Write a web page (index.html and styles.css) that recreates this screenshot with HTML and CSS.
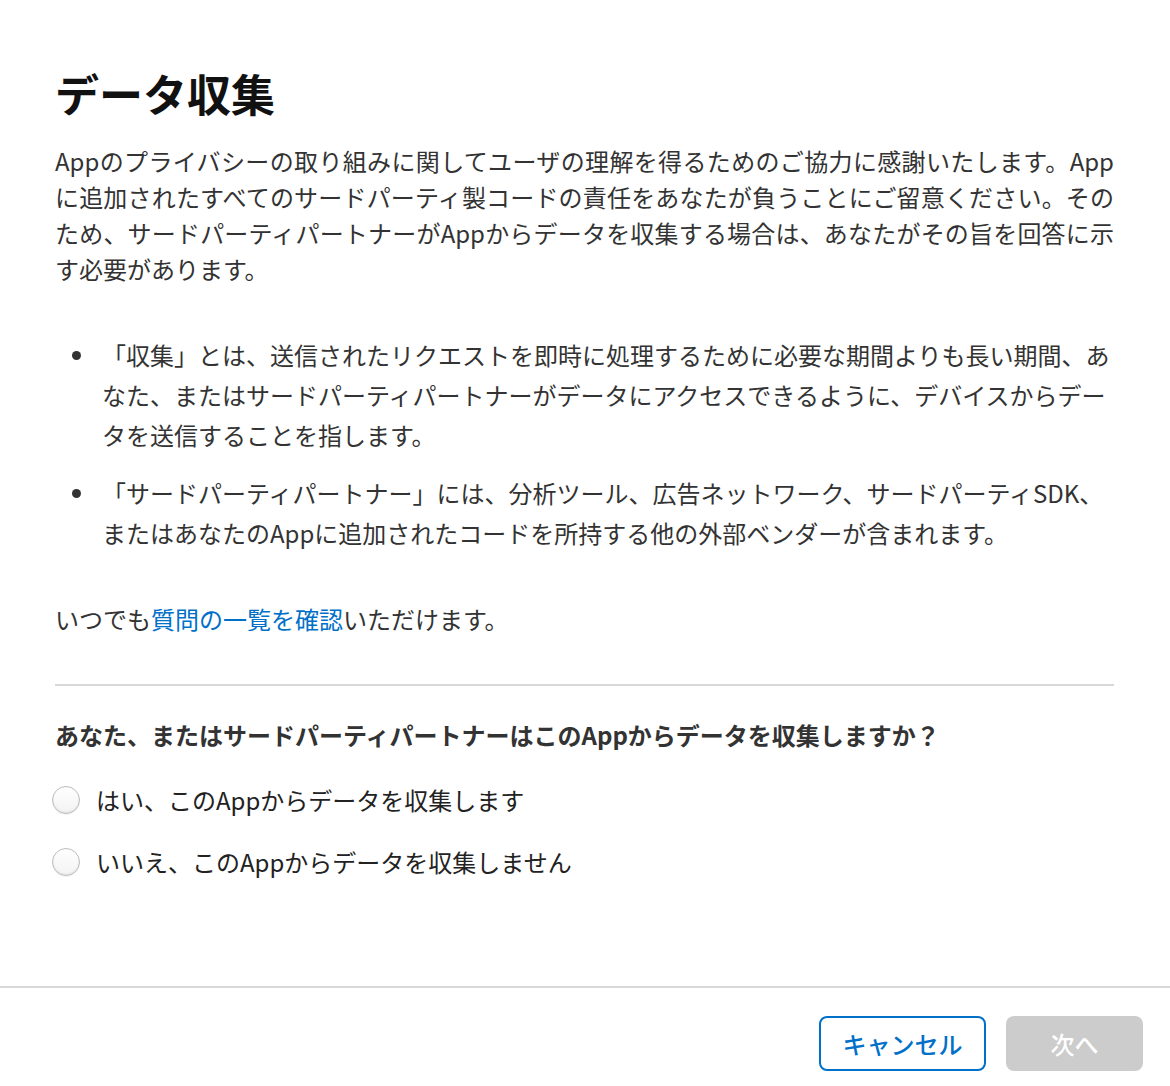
FILE: index.html
```html
<!DOCTYPE html>
<html lang="ja">
<head>
<meta charset="utf-8">
<title>データ収集</title>
<link rel="stylesheet" href="styles.css">
</head>
<body>
<div class="modal">
  <main class="content">
    <h1 class="title">データ収集</h1>
    <p class="intro">Appのプライバシーの取り組みに関してユーザの理解を得るためのご協力に感謝いたします。Appに追加されたすべてのサードパーティ製コードの責任をあなたが負うことにご留意ください。そのため、サードパーティパートナーがAppからデータを収集する場合は、あなたがその旨を回答に示す必要があります。</p>
    <ul class="defs">
      <li class="def">「収集」とは、送信されたリクエストを即時に処理するために必要な期間よりも長い期間、あなた、またはサードパーティパートナーがデータにアクセスできるように、デバイスからデータを送信することを指します。</li>
      <li class="def">「サードパーティパートナー」には、分析ツール、広告ネットワーク、サードパーティSDK、またはあなたのAppに追加されたコードを所持する他の外部ベンダーが含まれます。</li>
    </ul>
    <p class="note">いつでも<a class="link" href="#">質問の一覧を確認</a>いただけます。</p>
    <hr class="divider">
    <p class="question">あなた、またはサードパーティパートナーはこのAppからデータを収集しますか？</p>
    <div class="options">
      <label class="option"><span class="radio"></span><span class="option-text">はい、このAppからデータを収集します</span></label>
      <label class="option"><span class="radio"></span><span class="option-text">いいえ、このAppからデータを収集しません</span></label>
    </div>
  </main>
  <footer class="footer">
    <button class="btn btn-cancel" type="button">キャンセル</button>
    <button class="btn btn-next" type="button" disabled>次へ</button>
  </footer>
</div>
</body>
</html>
```

FILE: styles.css
```css
* { box-sizing: border-box; }

html, body {
  margin: 0;
  padding: 0;
  background: #fff;
}

body {
  font-family: "Noto Sans CJK JP", "Noto Sans", sans-serif;
  color: #333;
  font-size: 24px;
}

.modal {
  height: 1086px;
  display: flex;
  flex-direction: column;
}

.content {
  flex: 1;
  padding: 67px 56px 0 55px;
}

.title {
  margin: 0;
  font-size: 44px;
  line-height: 52px;
  font-weight: 700;
  color: #111;
}

.intro {
  margin: 24px 0 0;
  line-height: 36px;
  text-align: justify;
}

.defs {
  list-style: none;
  margin: 48px 0 0;
  padding: 0;
  display: flex;
  flex-direction: column;
  gap: 18px;
}

.def {
  display: flex;
  line-height: 40px;
}

.def::before {
  content: "";
  flex: none;
  width: 9px;
  height: 9px;
  border-radius: 50%;
  background: #333;
  margin: 16px 21px 0 17px;
}

.note {
  margin: 48px 0 0;
  line-height: 36px;
}

.link {
  color: #0070c9;
  text-decoration: none;
}

.divider {
  margin: 47px 0 0;
  border: 0;
  height: 2px;
  background: #d8d8d8;
}

.question {
  margin: 31px 0 0;
  line-height: 36px;
  font-weight: 700;
  color: #333;
}

.options {
  margin-top: 16px;
  display: flex;
  flex-direction: column;
}

.option {
  height: 62px;
  display: flex;
  align-items: center;
  margin-left: -3px;
}

.radio {
  flex: none;
  width: 28px;
  height: 28px;
  border-radius: 50%;
  border: 1px solid #bdbdbd;
  background: linear-gradient(#ffffff, #f3f3f3);
  box-shadow: inset 0 -1px 2px rgba(0, 0, 0, 0.08), 0 1px 1px rgba(0, 0, 0, 0.06);
  margin-right: 16px;
}

.option-text {
  font-weight: 400;
  color: #222;
  line-height: 36px;
}

.footer {
  flex: none;
  height: 100px;
  border-top: 2px solid #d8d8d8;
  display: flex;
  justify-content: flex-end;
  align-items: flex-start;
  gap: 20px;
  padding: 28px 27px 0 0;
}

.btn {
  font-family: inherit;
  font-size: 24px;
  font-weight: 500;
  height: 55px;
  border-radius: 8px;
  cursor: pointer;
  line-height: 1;
}

.btn-cancel {
  width: 167px;
  background: #fff;
  color: #0070c9;
  border: 2px solid #0070c9;
}

.btn-next {
  width: 137px;
  background: #cccccc;
  color: #fff;
  border: 0;
}
```
